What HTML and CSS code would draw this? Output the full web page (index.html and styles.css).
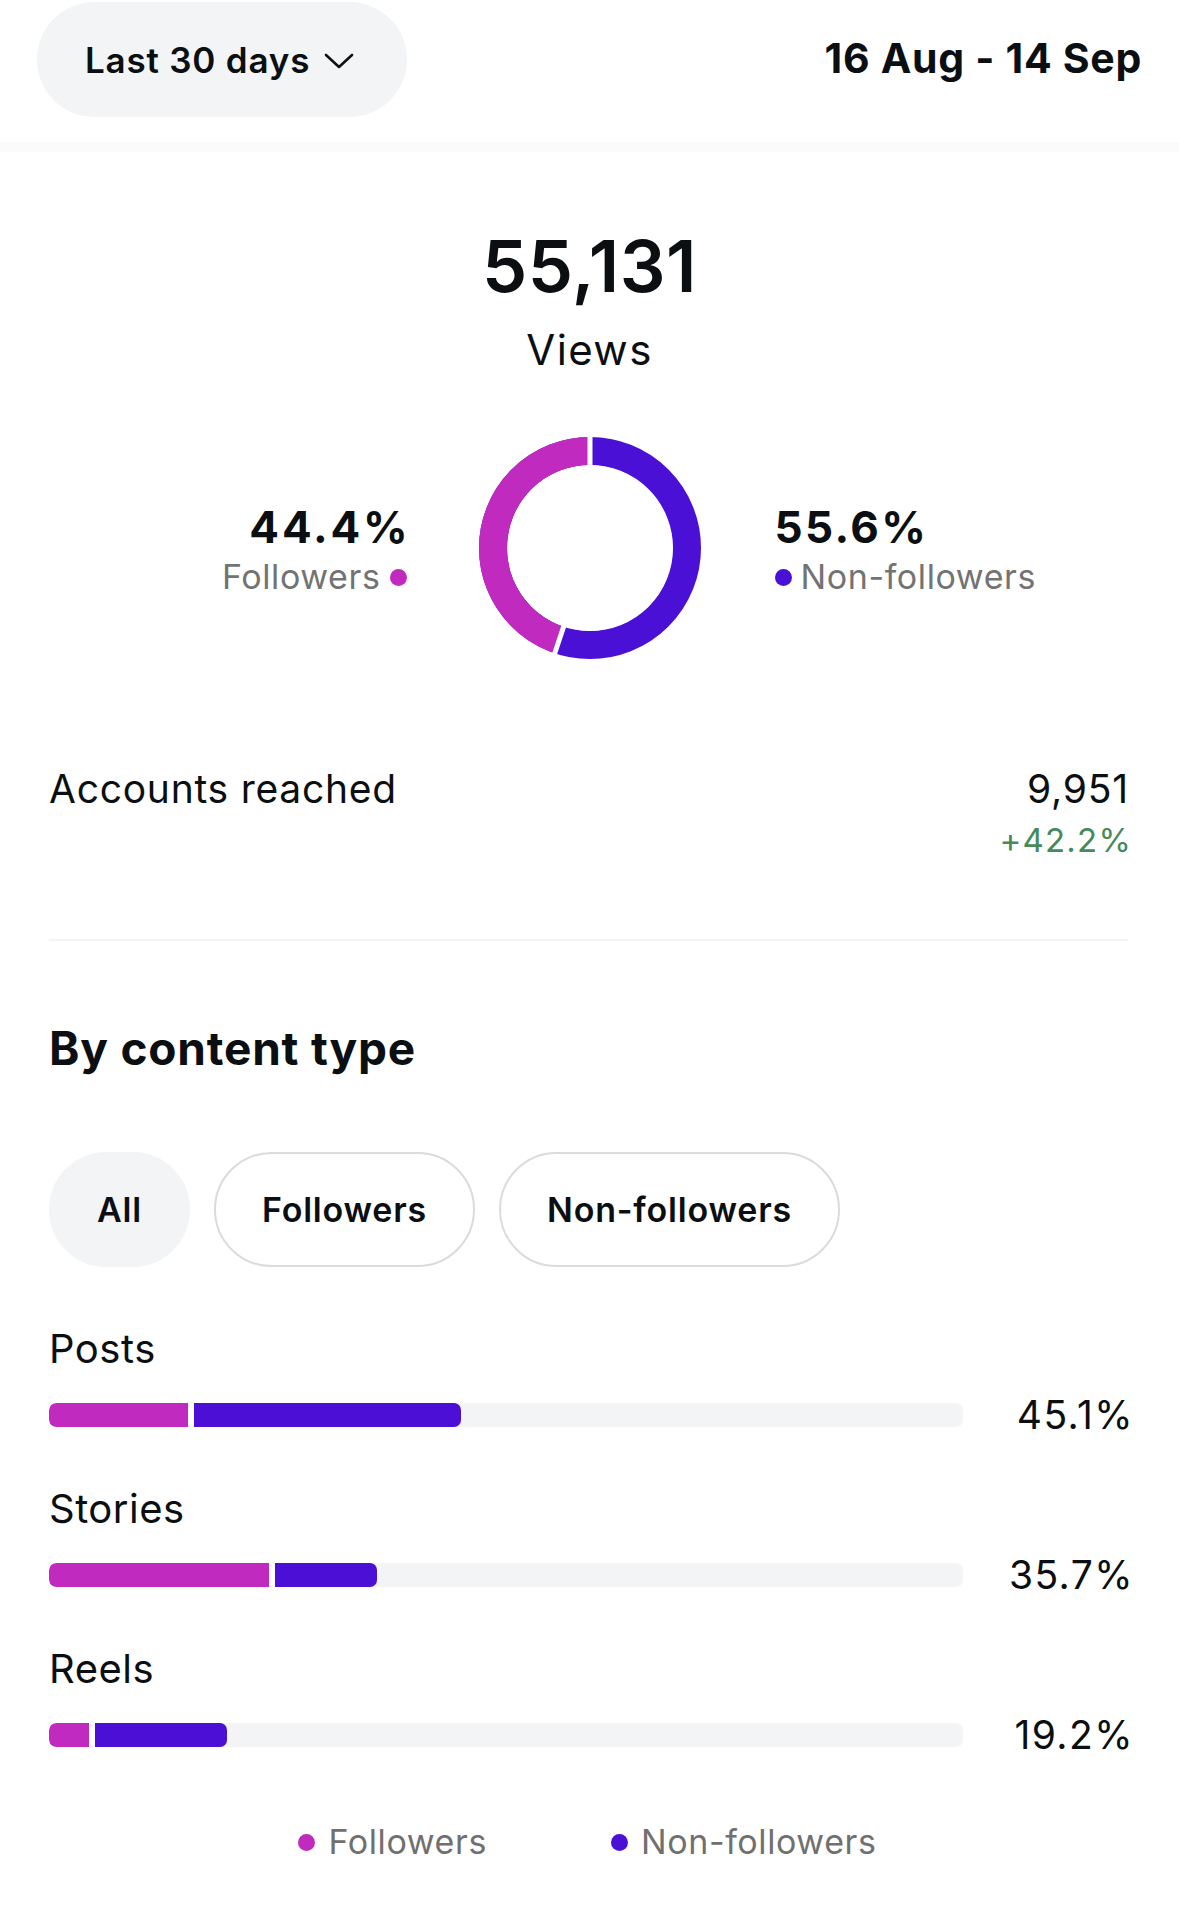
FILE: index.html
```html
<!DOCTYPE html>
<html lang="en">
<head>
<meta charset="utf-8">
<title>Views insights</title>
<link rel="stylesheet" href="styles.css">
</head>
<body>
<div class="page">
  <header class="header">
    <button class="range-pill">
      <span>Last 30 days</span>
      <svg class="chev" width="30" height="16" viewBox="0 0 30 16"><polyline points="2,2 15,14 28,2" fill="none" stroke="#111" stroke-width="2.6" stroke-linecap="round" stroke-linejoin="round"/></svg>
    </button>
    <div class="date-range">16 Aug - 14 Sep</div>
  </header>
  <div class="band"></div>

  <section class="summary">
    <div class="total">55,131</div>
    <div class="total-label">Views</div>

    <div class="donut-row">
      <div class="side side-left">
        <div class="pct">44.4%</div>
        <div class="legend-item"><span>Followers</span><span class="dot dot-f"></span></div>
      </div>
      <svg class="donut" width="222" height="222" viewBox="0 0 222 222">
        <circle cx="111" cy="111" r="97" fill="none" stroke="#4b10d5" stroke-width="28"/>
        <circle cx="111" cy="111" r="97" fill="none" stroke="#c12abf" stroke-width="28" stroke-dasharray="270.6 609.5" transform="rotate(-90 111 111) scale(1,-1) translate(0,-222)"/>
        <line x1="111" y1="0" x2="111" y2="30" stroke="#fff" stroke-width="5"/>
        <line x1="111" y1="111" x2="73.8" y2="222" stroke="#fff" stroke-width="5"/>
        <circle cx="111" cy="111" r="82.5" fill="#fff"/>
      </svg>
      <div class="side side-right">
        <div class="pct">55.6%</div>
        <div class="legend-item"><span class="dot dot-n"></span><span>Non-followers</span></div>
      </div>
    </div>
  </section>

  <section class="reach">
    <div class="reach-label">Accounts reached</div>
    <div class="reach-values">
      <div class="reach-num">9,951</div>
      <div class="reach-delta">+42.2%</div>
    </div>
  </section>
  <div class="divider"></div>

  <section class="content-type">
    <h2 class="section-title">By content type</h2>
    <div class="chips">
      <button class="chip chip-active">All</button>
      <button class="chip">Followers</button>
      <button class="chip">Non-followers</button>
    </div>

    <div class="rows">
      <div class="row">
        <div class="row-label">Posts</div>
        <div class="bar-line">
          <div class="track">
            <div class="seg seg-f" style="width:15.2%"></div>
            <div class="seg seg-n" style="width:29.9%"></div>
          </div>
          <div class="row-pct">45.1%</div>
        </div>
      </div>
      <div class="row">
        <div class="row-label">Stories</div>
        <div class="bar-line">
          <div class="track">
            <div class="seg seg-f" style="width:24.1%"></div>
            <div class="seg seg-n" style="width:11.8%"></div>
          </div>
          <div class="row-pct">35.7%</div>
        </div>
      </div>
      <div class="row">
        <div class="row-label">Reels</div>
        <div class="bar-line">
          <div class="track">
            <div class="seg seg-f" style="width:4.4%"></div>
            <div class="seg seg-n" style="width:15.1%"></div>
          </div>
          <div class="row-pct">19.2%</div>
        </div>
      </div>
    </div>

    <div class="legend">
      <div class="legend-item"><span class="dot dot-f"></span><span>Followers</span></div>
      <div class="legend-item"><span class="dot dot-n"></span><span>Non-followers</span></div>
    </div>
  </section>
</div>
</body>
</html>
```
FILE: styles.css
```css
* { box-sizing: border-box; }
html, body { margin: 0; padding: 0; background: #fff; }
body {
  font-family: Inter, "Noto Sans", Roboto, sans-serif;
  color: #0c0f12;
  width: 1179px;
}
button { font-family: inherit; color: inherit; }

.header {
  height: 117px;
  padding: 2px 38px 0 37px;
  display: flex;
  align-items: center;
  justify-content: space-between;
}
.range-pill {
  height: 115px;
  width: 370px;
  border: none;
  border-radius: 58px;
  background: #f2f4f5;
  display: flex;
  align-items: center;
  padding: 0 0 0 48px;
  gap: 14px;
  font-size: 35px;
  font-weight: 600;
  letter-spacing: 0.8px;
  cursor: pointer;
}
.chev { display: block; margin-top: 2px; }
.date-range {
  font-size: 41px;
  font-weight: 700;
  line-height: 50px;
  letter-spacing: 0.7px;
  margin-top: -3px;
  margin-right: -1px;
}
.band {
  margin-top: 25px;
  height: 10px;
  background: #fbfbfb;
}

.summary { text-align: center; }
.total {
  margin-top: 74px;
  font-size: 72px;
  font-weight: 600;
  line-height: 80px;
  letter-spacing: 0.5px;
}
.total-label {
  margin-top: 19px;
  font-size: 42px;
  line-height: 50px;
  letter-spacing: 1.4px;
}
.donut-row {
  margin-top: 62px;
  display: grid;
  grid-template-columns: 1fr 222px 1fr;
  column-gap: 74px;
  align-items: center;
}
.donut { display: block; }
.side { padding-top: 8px; }
.side-left { text-align: right; }
.side-left .legend-item { justify-content: flex-end; margin-right: -2px; }
.side-left .pct { margin-right: -6px; letter-spacing: 2.8px; }
.side-right { text-align: left; }
.pct {
  font-size: 44px;
  font-weight: 700;
  line-height: 50px;
  letter-spacing: 2.4px;
}
.legend-item {
  display: flex;
  align-items: center;
  gap: 9px;
  font-size: 34px;
  line-height: 50px;
  letter-spacing: 0.6px;
  color: #737373;
}
.dot {
  width: 17px;
  height: 17px;
  border-radius: 50%;
  display: inline-block;
  flex: none;
}
.dot-f { background: #c12abf; }
.dot-n { background: #4b10d5; }

.reach {
  margin-top: 106px;
  padding: 0 51px 0 49px;
  display: flex;
  justify-content: space-between;
  align-items: flex-start;
}
.reach-label {
  font-size: 39px;
  line-height: 48px;
  letter-spacing: 0.75px;
}
.reach-values { text-align: right; }
.reach-num {
  font-size: 39px;
  line-height: 48px;
  letter-spacing: 0.8px;
  margin-right: -1px;
}
.reach-delta {
  font-size: 33px;
  line-height: 54px;
  letter-spacing: 1.2px;
  margin-right: -4px;
  color: #46895a;
}
.divider {
  margin: 72px 51px 0 49px;
  height: 2px;
  background: #f4f4f4;
}

.content-type { padding: 0 51px 0 49px; }
.section-title {
  margin: 80px 0 0;
  font-size: 46px;
  font-weight: 700;
  line-height: 54px;
  letter-spacing: 0.8px;
}
.chips {
  margin-top: 77px;
  display: flex;
  gap: 24px;
}
.chip {
  height: 115px;
  border-radius: 58px;
  border: 2.5px solid #dbdbdb;
  background: #fff;
  padding: 0 46px;
  font-size: 34px;
  font-weight: 600;
  letter-spacing: 0.8px;
}
.chip-active {
  background: #f2f4f5;
  border-color: #f2f4f5;
}

.rows {
  margin-top: 58px;
  display: flex;
  flex-direction: column;
  gap: 50px;
}
.row-label {
  font-size: 40px;
  line-height: 48px;
  letter-spacing: 0.5px;
}
.bar-line {
  margin-top: 22px;
  height: 40px;
  display: flex;
  align-items: center;
}
.track {
  flex: 1;
  height: 24px;
  border-radius: 7px;
  background: #f2f4f6;
  display: flex;
  overflow: hidden;
}
.seg { height: 100%; }
.seg-f {
  background: #c12abf;
  border-radius: 7px 0 0 7px;
}
.seg-n {
  background: #4b10d5;
  border-left: 6px solid #fff;
  border-radius: 0 7px 7px 0;
}
.row-pct {
  flex: none;
  width: 171px;
  text-align: right;
  font-size: 39px;
  line-height: 40px;
  letter-spacing: 1.45px;
  margin-right: -6px;
}

.legend {
  margin-top: 63px;
  display: flex;
  justify-content: center;
  gap: 124px;
  padding-right: 2px;
}
.legend .legend-item {
  gap: 13px;
  line-height: 48px;
  color: #707070;
}
```
